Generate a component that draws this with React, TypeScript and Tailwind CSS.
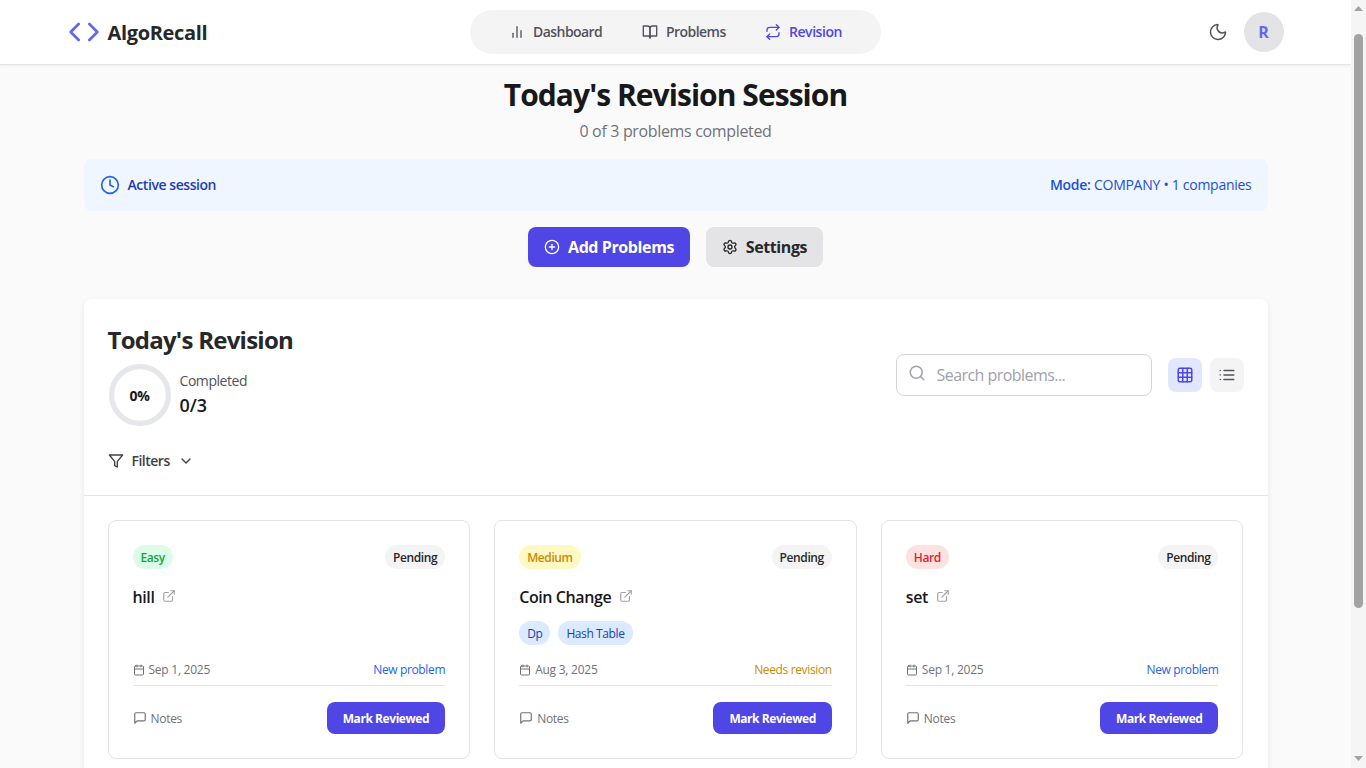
import React from "react";
import { FiBarChart2, FiBookOpen, FiRepeat, FiCode, FiClock, FiPlusCircle, FiFilter, FiChevronDown, FiSearch, FiList, FiExternalLink, FiCalendar, FiMessageSquare } from "react-icons/fi";
import { Grid3x3, Settings, Moon } from "lucide-react";

type Problem = {
  title: string;
  level: string;
  levelClass: string;
  tags: string[];
  date: string;
  status: string;
  statusClass: string;
};

const problems: Problem[] = [
  { title: "hill", level: "Easy", levelClass: "bg-[#dcfce7] text-[#16a34a]", tags: [], date: "Sep 1, 2025", status: "New problem", statusClass: "text-[#2563eb]" },
  { title: "Coin Change", level: "Medium", levelClass: "bg-[#fef9c3] text-[#ca8a04]", tags: ["Dp", "Hash Table"], date: "Aug 3, 2025", status: "Needs revision", statusClass: "text-[#ca8a04]" },
  { title: "set", level: "Hard", levelClass: "bg-[#fee2e2] text-[#dc2626]", tags: [], date: "Sep 1, 2025", status: "New problem", statusClass: "text-[#2563eb]" },
];

function ProblemCard({ p }: { p: Problem }) {
  return (
    <article className="flex h-[239px] flex-col rounded-lg border border-[#e4e4e7] bg-white p-6">
      <div className="flex h-6 items-center justify-between text-xs font-semibold tracking-[-0.4px]">
        <span className={`flex h-6 items-center rounded-full px-2 pt-px ${p.levelClass}`}>{p.level}</span>
        <span className="flex h-6 items-center rounded-full bg-[#f4f4f5] px-2 pt-px text-[#27272a]">Pending</span>
      </div>
      <h3 className="mt-4 flex h-6 items-center gap-2 text-base font-semibold tracking-[-0.4px] text-[#18181b]">
        {p.title}
        <FiExternalLink className="mb-[3px] size-3.5 text-[#a1a1aa]" />
      </h3>
      <div className="mt-3 flex h-6 gap-2">
        {p.tags.map((t) => (
          <span key={t} className="flex h-6 items-center rounded-full bg-[#dbeafe] px-2 pt-px text-xs tracking-[-0.4px] text-[#1e40af]">{t}</span>
        ))}
      </div>
      <div className="mt-[15px] flex h-5 items-center justify-between text-xs text-[#71717a]">
        <span className="flex items-center gap-1 tracking-[-0.25px]"><FiCalendar className="size-3" />{p.date}</span>
        <span className={`tracking-[-0.36px] ${p.statusClass}`}>{p.status}</span>
      </div>
      <div className="mt-[5px] flex items-center justify-between border-t border-[#e4e4e7] pt-4">
        <span className="flex items-center gap-1 text-xs tracking-[-0.3px] text-[#71717a]"><FiMessageSquare className="size-3.5" /><span className="pt-px">Notes</span></span>
        <button className="h-8 rounded-lg bg-[#4f46e5] px-4 pt-0.5 text-xs font-bold tracking-[-0.44px] text-white">Mark Reviewed</button>
      </div>
    </article>
  );
}

export default function App() {
  return (
    <div className="flex h-screen overflow-hidden bg-[#fafafa] font-['Open_Sans','Noto_Sans',sans-serif] text-[#18181b]">
      <div className="flex min-w-0 flex-1 flex-col">
        <header className="flex h-[65px] shrink-0 items-center justify-between border-b border-[#e4e4e7] bg-white px-[67.5px] shadow-[0_1px_2px_rgba(0,0,0,0.05)]">
          <div className="flex w-[402px] items-center gap-2">
            <FiCode className="size-8 text-[#6366f1]" />
            <span className="pt-0.5 text-xl font-bold tracking-[-0.35px] text-[#27272a]">AlgoRecall</span>
          </div>
          <nav className="flex h-11 w-[411px] items-center rounded-full bg-[#f4f4f5] text-sm font-semibold tracking-[-0.55px] text-[#52525b]">
            <span className="ml-[39px] flex w-[133px] items-center gap-2"><FiBarChart2 className="size-4" />Dashboard</span>
            <span className="flex w-[123px] items-center gap-2"><FiBookOpen className="size-4" />Problems</span>
            <span className="flex items-center gap-2 tracking-[-0.45px] text-[#4f46e5]"><FiRepeat className="size-4" />Revision</span>
          </nav>
          <div className="flex w-[402px] items-center justify-end gap-4">
            <Moon className="size-5 text-[#52525b]" strokeWidth={1.8} />
            <span className="flex size-10 items-center justify-center rounded-full bg-[#e4e4e7] text-base font-bold text-[#6366f1]">R</span>
          </div>
        </header>
        <main className="flex flex-col px-[83.5px]">
          <h1 className="mt-3 h-9 text-center text-3xl leading-9 font-bold tracking-[-0.95px]">Today's Revision Session</h1>
          <p className="mt-1.5 h-6 text-center text-base tracking-[-0.34px] text-[#71717a]">0 of 3 problems completed</p>
          <section className="mt-4 flex h-[52px] items-center justify-between rounded-lg bg-[#eff6ff] px-4 text-sm">
            <span className="flex items-center gap-2 font-semibold tracking-[-0.44px] text-[#1e40af]"><FiClock className="size-5 text-[#2563eb]" />Active session</span>
            <span className="tracking-[-0.27px] text-[#1d4ed8]"><b className="font-semibold">Mode:</b> COMPANY • 1 companies</span>
          </section>
          <div className="mt-4 flex h-10 justify-center gap-4 text-base font-bold tracking-[-0.4px]">
            <button className="flex w-[162px] items-center justify-center gap-2 rounded-lg bg-[#4f46e5] text-white"><FiPlusCircle className="size-4" />Add Problems</button>
            <button className="flex w-[117px] items-center justify-center gap-2 rounded-lg bg-[#e4e4e7] text-[#27272a]"><Settings className="size-4" />Settings</button>
          </div>
          <section className="mt-8 h-[600px] rounded-lg bg-white shadow-[0_2px_6px_rgba(0,0,0,0.07)]">
            <div className="flex h-[197px] justify-between border-b border-[#e4e4e7] px-6">
              <div className="flex flex-col">
                <h2 className="mt-[25px] h-8 text-2xl leading-8 font-bold tracking-[-0.75px] text-[#27272a]">Today's Revision</h2>
                <div className="mt-[7px] flex items-center gap-2">
                  <div className="grid size-16 place-items-center">
                    <svg viewBox="0 0 64 64" className="col-start-1 row-start-1 size-16"><circle cx="32" cy="32" r="28.4" fill="none" stroke="#e5e7eb" strokeWidth="5.2" /></svg>
                    <span className="col-start-1 row-start-1 pt-px text-sm font-bold tracking-[-0.3px]">0%</span>
                  </div>
                  <div>
                    <div className="text-sm leading-5 tracking-[-0.44px] text-[#52525b]">Completed</div>
                    <div className="text-lg leading-7 font-semibold">0/3</div>
                  </div>
                </div>
                <button className="mt-6 flex h-5 items-center text-sm font-semibold tracking-[-0.5px] text-[#3f3f46]"><FiFilter className="mr-2 size-4" />Filters<FiChevronDown className="ml-2 size-4" /></button>
              </div>
              <div className="mt-[55px] flex h-[42px] items-center">
                <div className="mr-4 flex h-[42px] w-64 items-center rounded-lg border border-[#d4d4d8] pl-[11px] text-base tracking-[-0.55px] text-[#a1a1aa]"><FiSearch className="mr-[11px] mb-1 size-[18px]" />Search problems...</div>
                <button className="mr-2 flex size-[34px] items-center justify-center rounded-lg bg-[#e0e7ff] text-[#4f46e5]"><Grid3x3 className="size-[18px]" /></button>
                <button className="flex size-[34px] items-center justify-center rounded-lg bg-[#f4f4f5] text-[#52525b]"><FiList className="size-[18px]" /></button>
              </div>
            </div>
            <div className="grid grid-cols-3 gap-6 p-6">
              {problems.map((p) => <ProblemCard key={p.title} p={p} />)}
            </div>
          </section>
        </main>
      </div>
      <aside className="flex w-[15px] shrink-0 flex-col items-center bg-[#f5f5f5]">
        <svg viewBox="0 0 15 34" className="h-[34px] w-[15px]"><path d="M3 11h9L7.500 6z" fill="#a3a3a3" /></svg>
        <div className="h-[574px] w-[9px] rounded-full bg-[#a3a3a3]" />
        <svg viewBox="0 0 15 20" className="mt-auto h-5 w-[15px]"><path d="M3 8h9l-4.500 5z" fill="#a3a3a3" /></svg>
      </aside>
    </div>
  );
}
